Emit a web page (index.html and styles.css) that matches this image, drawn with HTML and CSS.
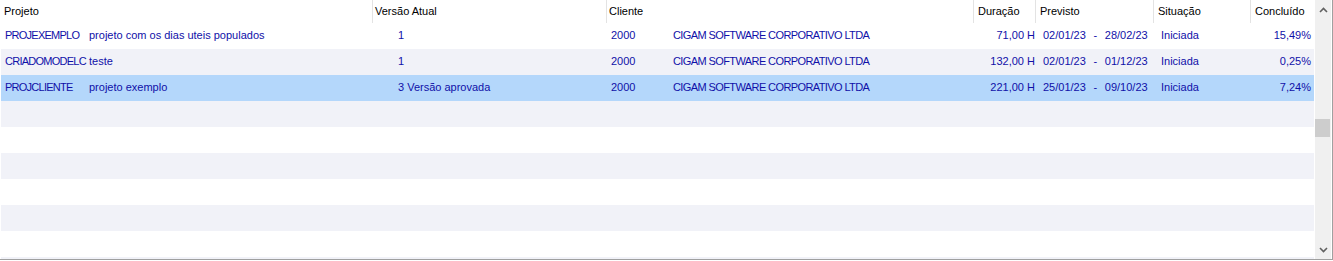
FILE: index.html
```html
<!DOCTYPE html>
<html>
<head>
<meta charset="utf-8">
<link rel="stylesheet" href="styles.css">
</head>
<body>
<div class="frame">
  <div class="grid">
    <div class="head">
      <div class="h c-proj">Projeto</div>
      <div class="h c-ver sep">Versão Atual</div>
      <div class="h c-cli sep">Cliente</div>
      <div class="h c-dur sep">Duração</div>
      <div class="h c-prev sep">Previsto</div>
      <div class="h c-sit sep">Situação</div>
      <div class="h c-conc sep">Concluído</div>
    </div>
    <div class="rows">
      <div class="row">
        <div class="d code caps">PROJEXEMPLO</div>
        <div class="d desc">projeto com os dias uteis populados</div>
        <div class="d ver">1</div>
        <div class="d ccode">2000</div>
        <div class="d cname caps">CIGAM SOFTWARE CORPORATIVO LTDA</div>
        <div class="d dur">71,00 H</div>
        <div class="d prev"><span class="dt">02/01/23</span><span class="dash">-</span><span class="dt">28/02/23</span></div>
        <div class="d sit">Iniciada</div>
        <div class="d conc">15,49%</div>
      </div>
      <div class="row alt">
        <div class="d code caps">CRIADOMODELC</div>
        <div class="d desc">teste</div>
        <div class="d ver">1</div>
        <div class="d ccode">2000</div>
        <div class="d cname caps">CIGAM SOFTWARE CORPORATIVO LTDA</div>
        <div class="d dur">132,00 H</div>
        <div class="d prev"><span class="dt">02/01/23</span><span class="dash">-</span><span class="dt">01/12/23</span></div>
        <div class="d sit">Iniciada</div>
        <div class="d conc">0,25%</div>
      </div>
      <div class="row sel">
        <div class="d code caps">PROJCLIENTE</div>
        <div class="d desc">projeto exemplo</div>
        <div class="d ver">3 Versão aprovada</div>
        <div class="d ccode">2000</div>
        <div class="d cname caps">CIGAM SOFTWARE CORPORATIVO LTDA</div>
        <div class="d dur">221,00 H</div>
        <div class="d prev"><span class="dt">25/01/23</span><span class="dash">-</span><span class="dt">09/10/23</span></div>
        <div class="d sit">Iniciada</div>
        <div class="d conc">7,24%</div>
      </div>
      <div class="row alt"></div>
      <div class="row"></div>
      <div class="row alt"></div>
      <div class="row"></div>
      <div class="row alt"></div>
      <div class="row"></div>
      <div class="row alt"></div>
    </div>
  </div>
  <div class="scroll">
    <div class="arrow">
      <svg width="9" height="6" viewBox="0 0 9 6"><polyline points="1,5 4.5,1.5 8,5" fill="none" stroke="#606060" stroke-width="1.6"/></svg>
    </div>
    <div class="track">
      <div class="thumb"></div>
    </div>
    <div class="arrow down">
      <svg width="9" height="6" viewBox="0 0 9 6"><polyline points="1,1 4.5,4.5 8,1" fill="none" stroke="#606060" stroke-width="1.6"/></svg>
    </div>
  </div>
</div>
</body>
</html>
```
FILE: styles.css
```css
html, body {
  margin: 0;
  padding: 0;
  background: #ffffff;
}

body {
  font-family: "Liberation Sans", Arial, sans-serif;
  font-size: 11px;
}

.frame {
  display: flex;
  gap: 1px;
  width: 1331px;
  height: 259px;
  padding-left: 1px;
  box-sizing: content-box;
  border-right: 1px solid #a0a0a0;
  border-bottom: 1px solid #a0a0a0;
  background: #ffffff;
}

.grid {
  width: 1313px;
  flex: none;
  display: flex;
  flex-direction: column;
  overflow: hidden;
}

.head {
  height: 23px;
  flex: none;
  display: grid;
  grid-template-columns: 371px 234px 367px 62px 118px 97px 64px;
  align-items: stretch;
  color: #000000;
}

.h {
  display: flex;
  align-items: center;
  padding-left: 3px;
  height: 22px;
  padding-bottom: 1px;
}

.h.sep {
  border-left: 1px solid #e3e3e3;
  padding-left: 2px;
}

.c-dur, .c-prev, .c-sit, .c-conc {
  padding-left: 4px !important;
}

.rows {
  display: flex;
  flex-direction: column;
}

.row {
  height: 26px;
  box-sizing: border-box;
  padding-bottom: 3px;
  flex: none;
  display: grid;
  grid-template-columns: 83px 288px 234px 62px 305px 62px 118px 97px 64px;
  align-items: center;
  color: #1010a8;
  background: #ffffff;
}

.row.alt {
  background: #f1f2f8;
}

.row.sel {
  background: #b4d7fb;
}

.d {
  white-space: nowrap;
  overflow: hidden;
}

.caps { letter-spacing: -0.6px; }

.code { padding-left: 4px; overflow: visible; letter-spacing: -0.75px; }
.desc { padding-left: 5px; }
.ver { padding-left: 26px; }
.ccode { padding-left: 5px; }
.cname { padding-left: 5px; }
.dur { text-align: right; padding-right: 0; }
.prev {
  display: flex;
  padding-left: 8px;
}
.prev .dash {
  width: 19px;
  text-align: center;
}
.sit { padding-left: 8px; }
.conc { text-align: right; padding-right: 3px; }

.scroll {
  width: 16px;
  flex: none;
  background: #f0f0f0;
  display: flex;
  flex-direction: column;
}

.arrow {
  height: 19px;
  flex: none;
  display: flex;
  align-items: center;
  justify-content: center;
}

.arrow.down {
  padding-top: 2px;
}

.track {
  flex: 1;
  padding-top: 100px;
}

.thumb {
  height: 18px;
  width: 15px;
  background: #cdcdcd;
}
```
